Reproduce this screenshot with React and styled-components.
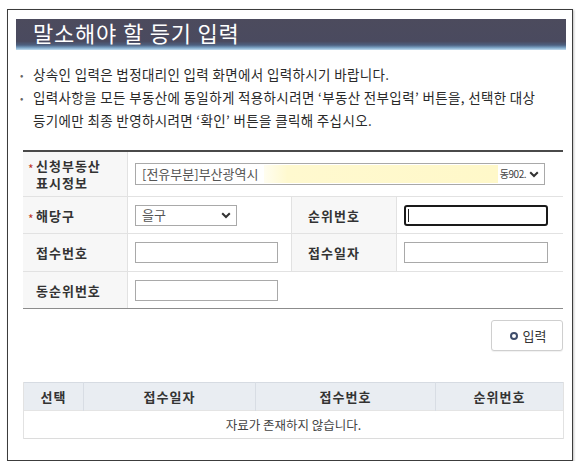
import styled, { createGlobalStyle } from 'styled-components';

const GlobalStyle = createGlobalStyle`
  html, body {
    margin: 0;
    padding: 0;
    background: #ffffff;
  }
  body {
    font-family: "Noto Sans CJK KR", "Noto Sans", "Liberation Sans", sans-serif;
    color: #333;
  }
  * { box-sizing: border-box; }
`;

const Frame = styled.div`
  margin: 9px 0 0 7px;
  width: 566px;
  height: 452px;
  border: 1px solid #3c3c3c;
  box-shadow: 1px 1px 2px rgba(0, 0, 0, 0.25);
  padding: 9px 9px 0 8px;
  display: flex;
  flex-direction: column;
`;

const TitleBar = styled.div`
  height: 31px;
  width: 550px;
  padding-left: 17px;
  display: flex;
  align-items: center;
  background: linear-gradient(
    to bottom,
    #4c4b5d 0%,
    #4a4a5f 72%,
    #4d6080 84%,
    #7ea6c8 93%,
    #c4def0 100%
  );
  color: #fff;
  font-size: 22px;
  letter-spacing: 0.8px;
  line-height: 1;
  padding-bottom: 5px;
`;

const Notice = styled.ul`
  list-style: none;
  margin: 13px 0 0;
  padding: 0 0 0 4px;
  font-size: 13.5px;
  letter-spacing: 0.35px;
  line-height: 23px;
  color: #2a2a2a;
`;

const NoticeItem = styled.li`
  position: relative;
  padding-left: 13px;
  white-space: nowrap;
  &::before {
    content: ${({ $bullet }) => ($bullet ? "'•'" : "''")};
    position: absolute;
    left: 0;
    top: 0;
    color: #666;
    font-size: 10px;
  }
`;

const Body = styled.div`
  padding-left: 7px;
  display: flex;
  flex-direction: column;
`;

const FormTable = styled.div`
  margin-top: 18px;
  width: 540px;
  display: grid;
  grid-template-columns: 105px 164px 105px 166px;
  grid-template-rows: 45px 37px 38px 36px;
  border-top: 2px solid #4a4a4a;
  border-bottom: 1px solid #8c8c8c;
`;

const Label = styled.div`
  display: flex;
  align-items: center;
  padding-left: ${({ $pad }) => $pad || 5}px;
  background: #f7f7f7;
  border-right: 1px solid #e2e2e2;
  border-bottom: ${({ $last }) => ($last ? 'none' : '1px solid #e2e2e2')};
  font-size: 13px;
  font-weight: bold;
  letter-spacing: 1px;
  line-height: 17px;
  color: #333;
`;

const Star = styled.span`
  width: 8px;
  flex: none;
  color: #c0392b;
  font-size: 12px;
  font-weight: normal;
  line-height: 17px;
  align-self: ${({ $top }) => ($top ? 'flex-start' : 'center')};
  margin-top: ${({ $top }) => $top || 0}px;
  position: relative;
  top: 3px;
`;

const Field = styled.div`
  grid-column: ${({ $span }) => ($span ? `span ${$span}` : 'auto')};
  display: flex;
  align-items: center;
  padding-left: 7px;
  background: #fff;
  border-right: ${({ $noRight }) => ($noRight ? 'none' : '1px solid #e2e2e2')};
  border-bottom: ${({ $last }) => ($last ? 'none' : '1px solid #e2e2e2')};
`;

const TextBox = styled.div`
  width: ${({ $w }) => $w}px;
  height: ${({ $h }) => $h || 21}px;
  border: ${({ $focus }) => ($focus ? '2px solid #1a1a1a' : '1px solid #a9a9a9')};
  border-radius: ${({ $focus }) => ($focus ? '3px' : '0')};
  background: #fff;
  display: flex;
  align-items: center;
  padding-left: 2px;
`;

const Caret = styled.span`
  width: 1px;
  height: 13px;
  background: #222;
`;

const SelectBox = styled.div`
  width: ${({ $w }) => $w}px;
  height: ${({ $h }) => $h || 21}px;
  border: 1px solid #a9a9a9;
  background: #fff;
  display: flex;
  align-items: center;
  padding: 0 5px 0 6px;
  font-size: 13px;
  color: #555;
  line-height: 18px;
`;

const SelectText = styled.span`
  flex: 1;
  display: flex;
  align-items: center;
  white-space: nowrap;
`;

const Masked = styled.span`
  flex: 1;
  height: 18px;
  margin-left: 6px;
  background: linear-gradient(to right, #fffdf0 0%, #fff9cf 10%, #fff8c9 100%);
`;

const Tail = styled.span`
  font-size: 10px;
  letter-spacing: -0.5px;
  color: #444;
  margin: 0 3px 0 2px;
`;

const Chevron = () => (
  <svg width="10" height="7" viewBox="0 0 10 7">
    <polyline points="1.2,1.2 5,5 8.8,1.2" fill="none" stroke="#333" strokeWidth="2" />
  </svg>
);

const ButtonRow = styled.div`
  width: 540px;
  margin-top: 11px;
  display: flex;
  justify-content: flex-end;
`;

const InputButton = styled.button`
  width: 72px;
  height: 31px;
  border: 1px solid #cfcfcf;
  border-radius: 3px;
  background: #fff;
  box-shadow: 0 1px 1px rgba(0, 0, 0, 0.06);
  display: flex;
  align-items: center;
  justify-content: center;
  gap: 5px;
  font-family: inherit;
  font-size: 13px;
  color: #333;
  padding: 0 0 0 2px;
  cursor: pointer;
`;

const Ring = styled.span`
  width: 8px;
  height: 8px;
  border-radius: 50%;
  border: 2px solid #3f4d6b;
`;

const ListTable = styled.table`
  margin-top: 31px;
  width: 540px;
  border-collapse: collapse;
  table-layout: fixed;
  font-size: 13px;
  border-top: 1px solid #d6dbe2;
  border-bottom: 1px solid #dcdcdc;
`;

const Th = styled.th`
  width: ${({ $w }) => $w}px;
  height: 28px;
  background: #e9edf2;
  border-left: 1px solid #d8dde4;
  border-right: 1px solid #d8dde4;
  font-weight: bold;
  letter-spacing: 1px;
  color: #333;
  padding: 0;
  &:first-child { border-left: 1px solid #e2e2e2; }
  &:last-child { border-right: 1px solid #e2e2e2; }
`;

const Td = styled.td`
  height: 28px;
  text-align: center;
  font-size: 12.5px;
  color: #444;
  border-left: 1px solid #e2e2e2;
  border-right: 1px solid #e2e2e2;
  border-top: 1px solid #e4e4e4;
  padding: 0;
`;

export default function App() {
  return (
    <>
      <GlobalStyle />
      <Frame>
        <TitleBar>말소해야 할 등기 입력</TitleBar>
        <Notice>
          <NoticeItem $bullet>상속인 입력은 법정대리인 입력 화면에서 입력하시기 바랍니다.</NoticeItem>
          <NoticeItem $bullet>입력사항을 모든 부동산에 동일하게 적용하시려면 ‘부동산 전부입력’ 버튼을, 선택한 대상</NoticeItem>
          <NoticeItem>등기에만 최종 반영하시려면 ‘확인’ 버튼을 클릭해 주십시오.</NoticeItem>
        </Notice>
        <Body>
          <FormTable>
            <Label>
              <Star $top={5}>*</Star>
              <span>신청부동산<br />표시정보</span>
            </Label>
            <Field $span={3} $noRight>
              <SelectBox $w={410} $h={22}>
                <SelectText>
                  [전유부분]부산광역시
                  <Masked />
                  <Tail>동902.</Tail>
                </SelectText>
                <Chevron />
              </SelectBox>
            </Field>

            <Label>
              <Star>*</Star>
              <span>해당구</span>
            </Label>
            <Field>
              <SelectBox $w={102}>
                <SelectText>을구</SelectText>
                <Chevron />
              </SelectBox>
            </Field>
            <Label $pad={16}>순위번호</Label>
            <Field $noRight>
              <TextBox $w={144} $h={21} $focus>
                <Caret />
              </TextBox>
            </Field>

            <Label $pad={13}>접수번호</Label>
            <Field>
              <TextBox $w={143} />
            </Field>
            <Label $pad={16}>접수일자</Label>
            <Field $noRight>
              <TextBox $w={144} />
            </Field>

            <Label $pad={13} $last>동순위번호</Label>
            <Field $span={3} $noRight $last>
              <TextBox $w={143} />
            </Field>
          </FormTable>

          <ButtonRow>
            <InputButton type="button">
              <Ring />
              입력
            </InputButton>
          </ButtonRow>

          <ListTable>
            <thead>
              <tr>
                <Th $w={60}>선택</Th>
                <Th $w={172}>접수일자</Th>
                <Th $w={180}>접수번호</Th>
                <Th $w={128}>순위번호</Th>
              </tr>
            </thead>
            <tbody>
              <tr>
                <Td colSpan={4}>자료가 존재하지 않습니다.</Td>
              </tr>
            </tbody>
          </ListTable>
        </Body>
      </Frame>
    </>
  );
}
